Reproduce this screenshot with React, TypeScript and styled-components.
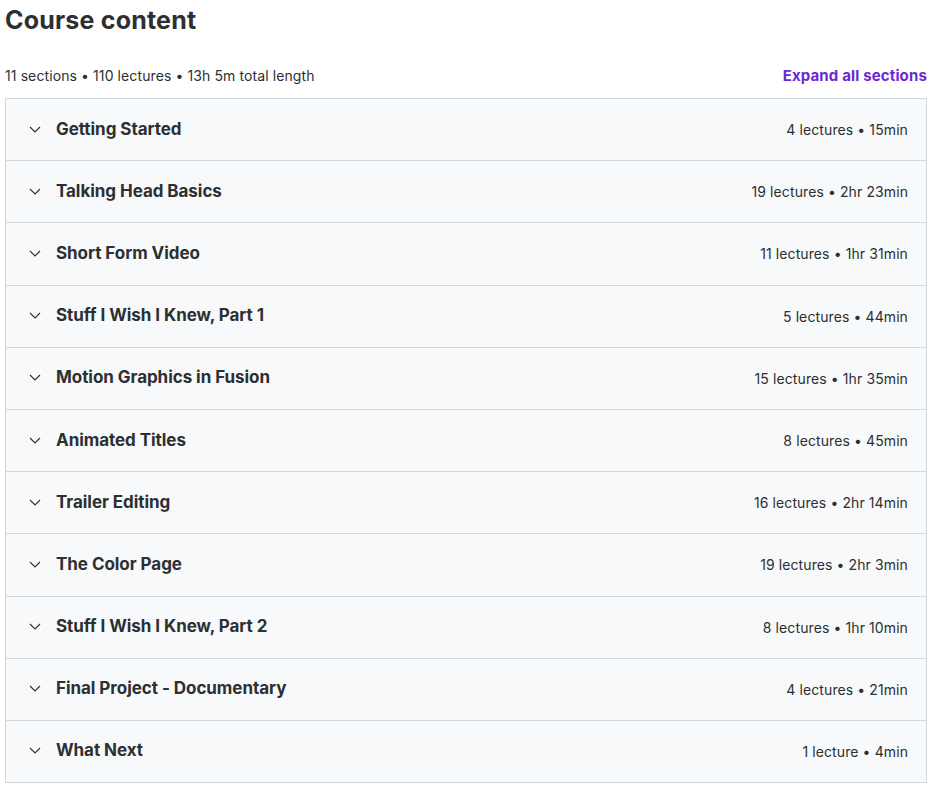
import React from 'react'
import styled, { createGlobalStyle } from 'styled-components'

const GlobalStyle = createGlobalStyle`
  body {
    margin: 0;
    background: #ffffff;
    font-family: Inter, "Liberation Sans", sans-serif;
    color: #2d2f31;
  }
`

const Page = styled.div`
  width: 922px;
  padding: 0 0 0 5px;
`

const Title = styled.h2`
  margin: 0;
  padding-top: 5px;
  font-size: 25px;
  line-height: 30px;
  font-weight: 700;
  letter-spacing: 0.2px;
`

const SummaryBar = styled.div`
  display: flex;
  align-items: center;
  justify-content: space-between;
  margin-top: 27px;
  height: 26px;
  margin-bottom: 10px;
`

const Summary = styled.span`
  font-size: 14px;
  letter-spacing: 0.1px;
`

const ExpandLink = styled.button`
  border: 0;
  background: none;
  padding: 0;
  font-family: inherit;
  font-size: 15px;
  font-weight: 700;
  color: #6d28d2;
  letter-spacing: 0.15px;
  cursor: pointer;
`

const Accordion = styled.div`
  border: 1px solid #d1d7dc;
  border-bottom: 0;
`

const SectionRow = styled.div`
  display: flex;
  align-items: center;
  box-sizing: border-box;
  height: 62.2px;
  padding: 0 18px 2px 23px;
  background: #f7f9fa;
  border-bottom: 1px solid #d1d7dc;
`

const Chevron = styled.svg`
  width: 12px;
  height: 12px;
  flex-shrink: 0;
  margin-right: 15px;
`

const SectionTitle = styled.span`
  flex: 1;
  font-size: 17px;
  font-weight: 700;
  letter-spacing: -0.05px;
`

const SectionMeta = styled.span`
  font-size: 14px;
  letter-spacing: 0.1px;
  padding-top: 2px;
`

const sections = [
  ['Getting Started', '4 lectures • 15min'],
  ['Talking Head Basics', '19 lectures • 2hr 23min'],
  ['Short Form Video', '11 lectures • 1hr 31min'],
  ['Stuff I Wish I Knew, Part 1', '5 lectures • 44min'],
  ['Motion Graphics in Fusion', '15 lectures • 1hr 35min'],
  ['Animated Titles', '8 lectures • 45min'],
  ['Trailer Editing', '16 lectures • 2hr 14min'],
  ['The Color Page', '19 lectures • 2hr 3min'],
  ['Stuff I Wish I Knew, Part 2', '8 lectures • 1hr 10min'],
  ['Final Project - Documentary', '4 lectures • 21min'],
  ['What Next', '1 lecture • 4min'],
]

const App = () => {
  return (
    <Page>
      <GlobalStyle />
      <Title>Course content</Title>
      <SummaryBar>
        <Summary>11 sections • 110 lectures • 13h 5m total length</Summary>
        <ExpandLink>Expand all sections</ExpandLink>
      </SummaryBar>
      <Accordion>
        {sections.map(([name, meta]) => (
          <SectionRow key={name}>
            <Chevron viewBox="0 0 12 12">
              <path d="M1 4 L6 9 L11 4" fill="none" stroke="#2d2f31" strokeWidth="1.1" />
            </Chevron>
            <SectionTitle>{name}</SectionTitle>
            <SectionMeta>{meta}</SectionMeta>
          </SectionRow>
        ))}
      </Accordion>
    </Page>
  )
}

export default App
